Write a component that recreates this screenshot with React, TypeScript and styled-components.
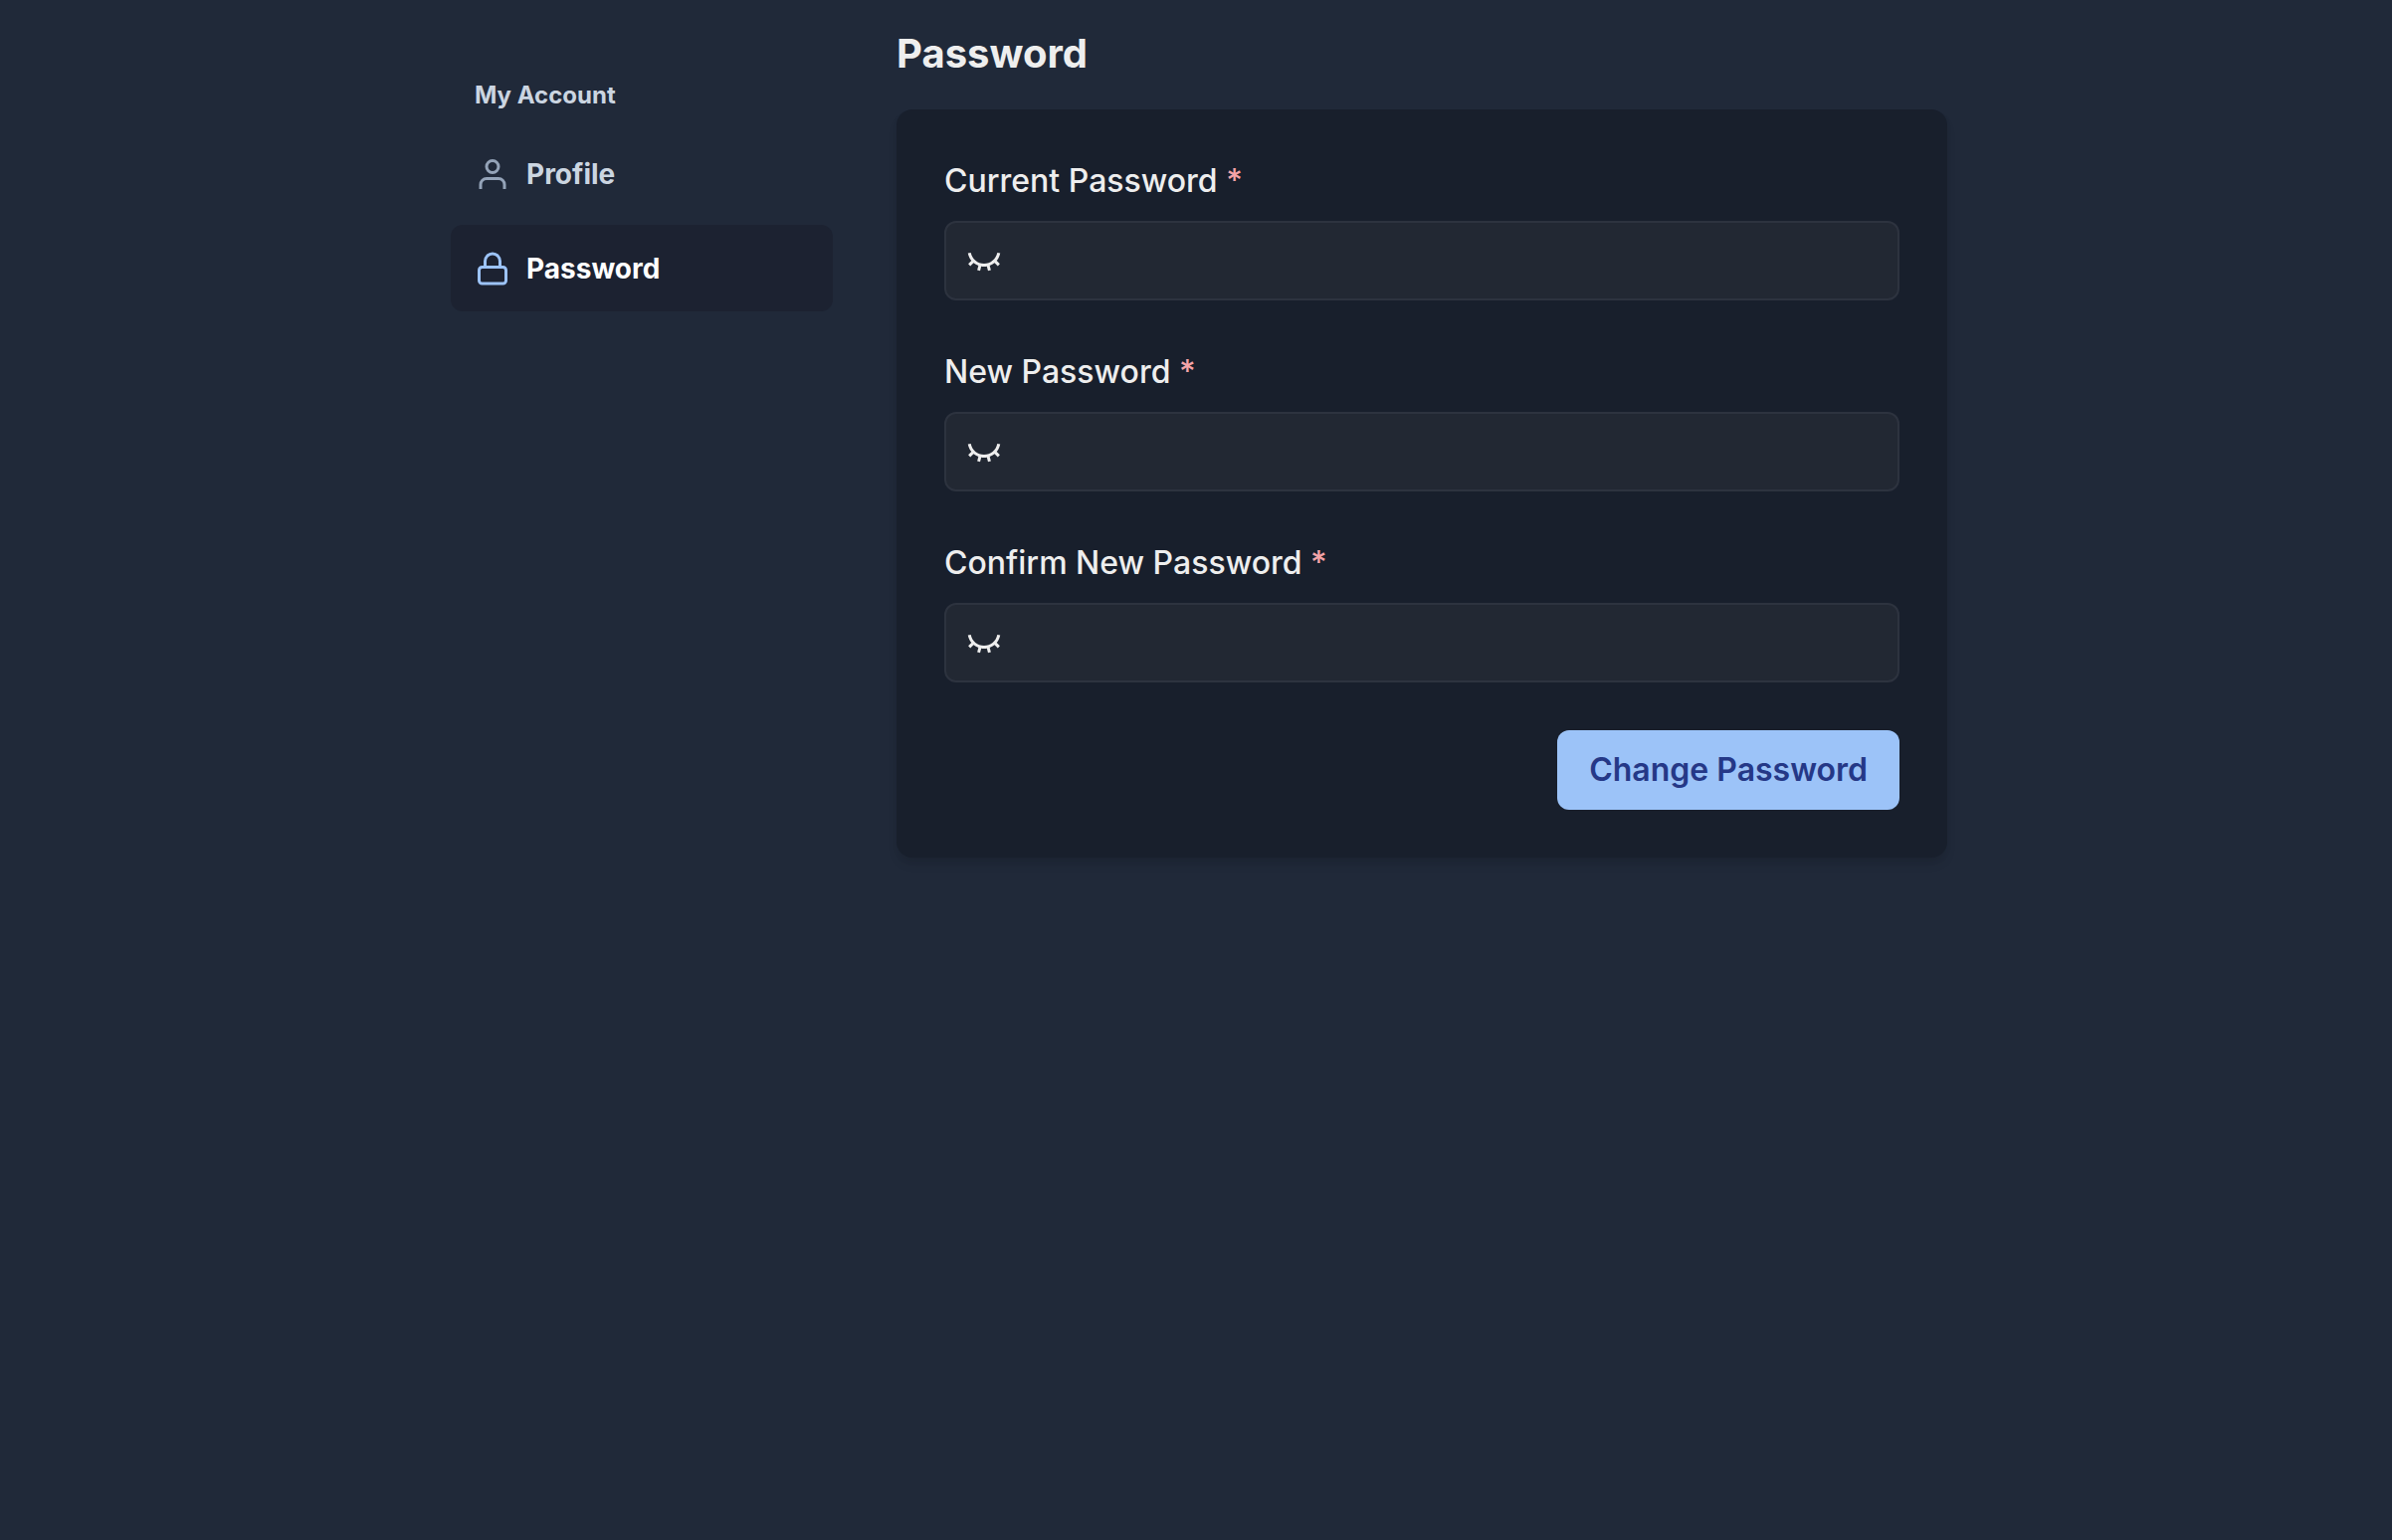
import React, { useState } from "react";
import styled, { createGlobalStyle } from "styled-components";
import { RiEyeCloseLine, RiEyeLine } from "react-icons/ri";

const GlobalStyle = createGlobalStyle`
  *, *::before, *::after { box-sizing: border-box; }
  body {
    margin: 0;
    background: #202939;
    color: #eeeeee;
    font-family: Inter, "Liberation Sans", sans-serif;
    font-size: 32px;
    line-height: 48px;
  }
`;

const Page = styled.div`
  display: grid;
  grid-template-columns: 384px minmax(0, 1fr);
  column-gap: 64px;
  align-items: start;
  max-width: 1510px;
  margin: 0 auto;
  padding-left: 6px;
`;

const Sidebar = styled.nav`
  display: flex;
  flex-direction: column;
  gap: 8px;
  padding-top: 59px;
`;

const SidebarTitle = styled.h2`
  margin: 0;
  padding: 19px 24px 9px;
  font-size: 24px;
  font-weight: 700;
  line-height: 36px;
  color: #cbd5e1;
`;

const NavLink = styled.a<{ $active?: boolean }>`
  display: flex;
  align-items: center;
  gap: 16px;
  height: 87px;
  padding: 0 24px;
  border-radius: 12px;
  background: ${(p) => (p.$active ? "#1c2231" : "transparent")};
  color: ${(p) => (p.$active ? "#ffffff" : "#cbd5e1")};
  font-size: 28px;
  font-weight: 700;
  line-height: 40px;
  text-decoration: none;
`;

const NavIcon = styled.svg<{ $active?: boolean }>`
  flex: none;
  width: 36px;
  height: 36px;
  fill: none;
  stroke: ${(p) => (p.$active ? "#9cc3f8" : "#94a3b8")};
  stroke-width: 2;
  stroke-linejoin: round;
`;

const Content = styled.main`
  display: flex;
  flex-direction: column;
  gap: 32px;
  padding: 30px 0;
`;

const Title = styled.h1`
  margin: 0;
  font-size: 40px;
  font-weight: 700;
  line-height: 48px;
`;

const Card = styled.form`
  display: flex;
  flex-direction: column;
  gap: 48px;
  padding: 48px;
  border-radius: 16px;
  background: #181f2c;
  box-shadow: 0 8px 12px -2px rgba(0, 0, 0, 0.1), 0 4px 8px -2px rgba(0, 0, 0, 0.06);
`;

const Field = styled.div`
  display: flex;
  flex-direction: column;
  gap: 16px;
`;

const Label = styled.label`
  font-weight: 450;
`;

const Required = styled.span`
  color: #f4a3a8;
`;

const InputBox = styled.div`
  display: flex;
  align-items: center;
  gap: 16px;
  height: 80px;
  padding: 0 20px;
  border: 2px solid #2d333f;
  border-radius: 12px;
  background: #222833;
`;

const RevealButton = styled.button`
  display: flex;
  flex: none;
  padding: 0;
  border: 0;
  background: none;
  color: #eeeeee;
  font-size: 36px;
  cursor: pointer;
`;

const Input = styled.input`
  flex: 1;
  min-width: 0;
  height: 100%;
  padding: 0;
  border: 0;
  outline: 0;
  background: transparent;
  color: inherit;
  font: inherit;
`;

const SubmitButton = styled.button`
  align-self: flex-end;
  height: 80px;
  padding: 0 32px;
  border: 0;
  border-radius: 12px;
  background: #9cc3f8;
  color: #253887;
  font: inherit;
  font-weight: 600;
  cursor: pointer;
`;

function PasswordField({ id, label }: { id: string; label: string }) {
  const [visible, setVisible] = useState(false);
  return (
    <Field>
      <Label htmlFor={id}>
        {label} <Required>*</Required>
      </Label>
      <InputBox>
        <RevealButton
          type="button"
          aria-label={visible ? "Hide password" : "Show password"}
          onClick={() => setVisible(!visible)}
        >
          {visible ? <RiEyeLine /> : <RiEyeCloseLine />}
        </RevealButton>
        <Input id={id} type={visible ? "text" : "password"} required />
      </InputBox>
    </Field>
  );
}

export default function App() {
  return (
    <>
      <GlobalStyle />
      <Page>
        <Sidebar aria-label="Account">
          <SidebarTitle>My Account</SidebarTitle>
          <NavLink href="#profile">
            <NavIcon viewBox="0 0 24 24" aria-hidden="true">
              <path d="M20 22v-3a4 4 0 0 0-4-4H8a4 4 0 0 0-4 4v3" />
              <circle cx="12" cy="7" r="4" />
            </NavIcon>
            Profile
          </NavLink>
          <NavLink href="#password" $active aria-current="page">
            <NavIcon $active viewBox="0 0 24 24" aria-hidden="true">
              <rect x="3" y="11" width="18" height="11" rx="2" />
              <path d="M7 11V7a5 5 0 0 1 10 0v4" />
            </NavIcon>
            Password
          </NavLink>
        </Sidebar>
        <Content>
          <Title>Password</Title>
          <Card onSubmit={(e) => e.preventDefault()}>
            <PasswordField id="current-password" label="Current Password" />
            <PasswordField id="new-password" label="New Password" />
            <PasswordField id="confirm-password" label="Confirm New Password" />
            <SubmitButton type="submit">Change Password</SubmitButton>
          </Card>
        </Content>
      </Page>
    </>
  );
}
